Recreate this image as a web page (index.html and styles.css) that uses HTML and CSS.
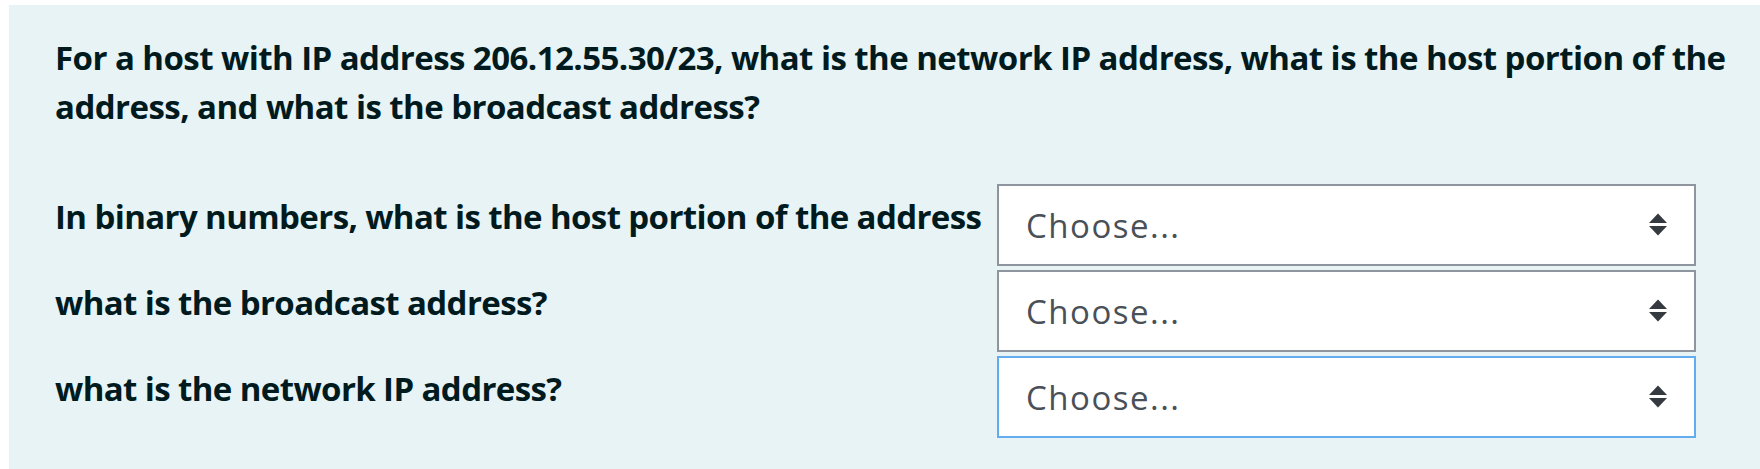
FILE: index.html
```html
<!DOCTYPE html>
<html lang="en">
<head>
<meta charset="utf-8">
<title>Question</title>
<link rel="stylesheet" href="styles.css">
</head>
<body>
<div class="que">
  <p class="qtext">For a host with IP address 206.12.55.30/23, what is the network IP address, what is the host portion of the address, and what is the broadcast address?</p>
  <table class="answer">
    <tbody>
      <tr>
        <td class="text">In binary numbers, what is the host portion of the address</td>
        <td class="control">
          <div class="select-wrap">
            <select class="select"><option>Choose...</option></select>
            <svg class="caret" width="18" height="23" viewBox="0 0 18 23" aria-hidden="true"><polygon points="0,10 9,0.6 18,10"/><polygon points="0,13 18,13 9,22.4"/></svg>
          </div>
        </td>
      </tr>
      <tr>
        <td class="text">what is the broadcast address?</td>
        <td class="control">
          <div class="select-wrap">
            <select class="select"><option>Choose...</option></select>
            <svg class="caret" width="18" height="23" viewBox="0 0 18 23" aria-hidden="true"><polygon points="0,10 9,0.6 18,10"/><polygon points="0,13 18,13 9,22.4"/></svg>
          </div>
        </td>
      </tr>
      <tr>
        <td class="text">what is the network IP address?</td>
        <td class="control">
          <div class="select-wrap">
            <select class="select select-focus"><option>Choose...</option></select>
            <svg class="caret" width="18" height="23" viewBox="0 0 18 23" aria-hidden="true"><polygon points="0,10 9,0.6 18,10"/><polygon points="0,13 18,13 9,22.4"/></svg>
          </div>
        </td>
      </tr>
    </tbody>
  </table>
</div>
</body>
</html>
```
FILE: styles.css
```css
html, body {
  margin: 0;
  background: #ffffff;
}

.que {
  margin: 5px 0 0 9px;
  padding: 28px 0 40px 46px;
  background: #e7f3f5;
  color: #001a1e;
  font-family: "Open Sans", "Liberation Sans", sans-serif;
  font-size: 33px;
  line-height: 49px;
}

.qtext {
  margin: 0 0 51px;
  font-weight: 700;
  letter-spacing: -0.55px;
  max-width: 1690px;
}

.answer {
  border-collapse: collapse;
  border-spacing: 0;
}

.answer td {
  padding: 2px 0 2.2px;
  vertical-align: top;
}

.answer td.text {
  width: 942px;
  padding-top: 10px;
  font-weight: 700;
  letter-spacing: -0.6px;
  white-space: nowrap;
}

.select-wrap {
  position: relative;
  width: 699px;
  height: 82px;
}

.select {
  -webkit-appearance: none;
  appearance: none;
  display: block;
  box-sizing: border-box;
  width: 100%;
  height: 82px;
  margin: 0;
  padding: 0 60px 0 27px;
  border: 2px solid #8f959e;
  border-radius: 0;
  background: #ffffff;
  color: #495057;
  font-family: "Open Sans", "Liberation Sans", sans-serif;
  font-size: 33px;
  font-weight: 400;
  letter-spacing: 1.5px;
  outline: none;
}

.select-focus {
  border-color: #62acef;
}

.caret {
  position: absolute;
  right: 29px;
  top: 29px;
  fill: #343a40;
  pointer-events: none;
}
```
